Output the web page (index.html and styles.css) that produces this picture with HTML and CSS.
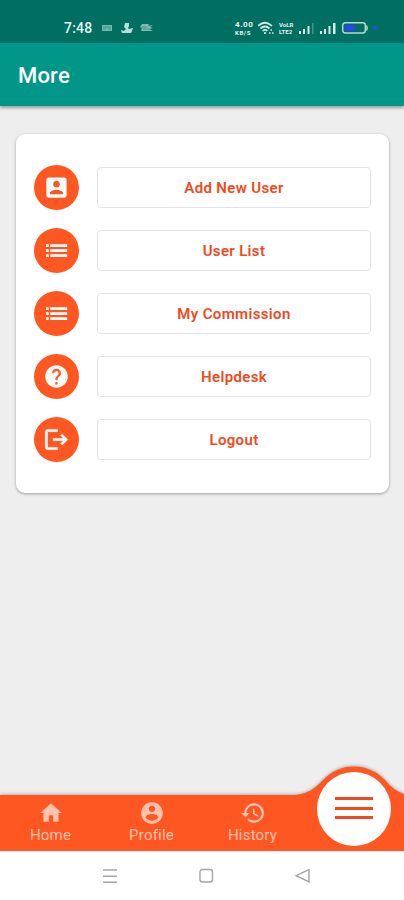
FILE: index.html
```html
<!DOCTYPE html>
<html lang="en">
<head>
<meta charset="utf-8">
<title>More</title>
<link rel="stylesheet" href="styles.css">
</head>
<body>
<div class="screen">
  <div class="status">
    <span class="clock">7:48</span>
    <svg class="notes" width="54" height="14" viewBox="0 0 54 14" fill="#b9dcd6">
      <path d="M2 4h10v6H2z" opacity=".65"/><path d="M3 6h8M3 8h3m2 0h3" stroke="#006f62" stroke-width=".5"/>
      <path d="M25 2h4v3l-1 2 1 1 4-1-1 3-1 2h-9l-1-3 3 1 2-2-2-2z"/>
      <path d="M42 3h7l-1 2 5-1-3 2 3 1-4 1 4 2H41l1-3-2-1z" opacity=".7"/><path d="M42 6h5m-4 2h6" stroke="#006f62" stroke-width=".5"/>
    </svg>
    <span class="tiny speed"><span>4.00</span><span>KB/S</span></span>
    <svg class="wifi" width="17" height="14" viewBox="0 0 17 14" fill="none" stroke="#d5ebe7" stroke-width="1.700">
      <path d="M0 5q7-6.500 14 0M2.500 7.500q4.500-4 9 0M4.800 9.900q2.300-2 4.600 0"/><path d="M7 11v2M11 12h1.500m0-3H14m0 3h1.500"/>
    </svg>
    <span class="tiny volte"><span>VoLR</span><span>LTE2</span></span>
    <svg class="signals" width="40" height="14" viewBox="0 0 40 14" fill="#d5ebe7">
      <path d="M0 10h2v3H0zM4 8h2v5H4zM8.500 5h2v8h-2z"/><path d="M13 2h1.500v11H13z" opacity=".3"/>
      <path d="M21 10h2v3h-2zM25 8h2v5h-2zM29.500 5h2v8h-2zM34 2h2.500v11H34z"/>
    </svg>
    <svg class="battery" width="36" height="12" viewBox="0 0 36 12">
      <rect x=".7" y=".7" width="22.600" height="10.300" rx="2.500" fill="none" stroke="#b4d9d2" stroke-width="1.400"/>
      <rect x="2.800" y="2.800" width="10" height="6.300" fill="#2748e2"/><path d="M24.500 3.500q1.500 2.400 0 5" fill="none" stroke="#d5ebe7" stroke-width="1.300"/>
      <path d="M33.500 3L29 6h2l2.500 3L35 6z" fill="#2356cc"/>
    </svg>
  </div>
  <header class="appbar">More</header>
  <main class="content">
    <section class="card">
      <div class="row"><span class="disc"><svg viewBox="0 0 24 24"><path d="M3 5v14c0 1.100.89 2 2 2h14c1.100 0 2-.9 2-2V5c0-1.100-.9-2-2-2H5c-1.110 0-2 .9-2 2zm12 4c0 1.660-1.340 3-3 3s-3-1.340-3-3 1.340-3 3-3 3 1.340 3 3zm-9 8c0-2 4-3.100 6-3.100s6 1.100 6 3.100v1H6v-1z"/></svg></span><a class="btn">Add New User</a></div>
      <div class="row"><span class="disc"><svg viewBox="0 0 24 24"><path d="M2.700 6.500h2.400v2.400H2.700zm0 4.400h2.400v2.400H2.700zm0 4.400h2.400v2.400H2.700zM6.500 6.500h15v2.400h-15zm0 4.400h15v2.400h-15zm0 4.400h15v2.400h-15z"/></svg></span><a class="btn">User List</a></div>
      <div class="row"><span class="disc"><svg viewBox="0 0 24 24"><path d="M2.700 6.500h2.400v2.400H2.700zm0 4.400h2.400v2.400H2.700zm0 4.400h2.400v2.400H2.700zM6.500 6.500h15v2.400h-15zm0 4.400h15v2.400h-15zm0 4.400h15v2.400h-15z"/></svg></span><a class="btn">My Commission</a></div>
      <div class="row"><span class="disc"><svg viewBox="0 0 24 24"><path d="M12 2C6.480 2 2 6.480 2 12s4.480 10 10 10 10-4.480 10-10S17.520 2 12 2zm1 17h-2v-2h2v2zm2.070-7.750l-.9.920C13.450 12.900 13 13.500 13 15h-2v-.5c0-1.100.450-2.100 1.170-2.830l1.240-1.260c.370-.360.590-.860.590-1.410 0-1.100-.9-2-2-2s-2 .9-2 2H8c0-2.210 1.790-4 4-4s4 1.790 4 4c0 .880-.360 1.680-.930 2.250z"/></svg></span><a class="btn">Helpdesk</a></div>
      <div class="row"><span class="disc"><svg viewBox="0 0 24 24"><path d="M17 7l-1.410 1.410L18.170 11H9v2h9.170l-2.580 2.580L17 17l5-5zM4 5h9V3H4c-1.100 0-2 .9-2 2v14c0 1.100.9 2 2 2h9v-2H4V5z" stroke="#fff" stroke-width=".4"/></svg></span><a class="btn">Logout</a></div>
    </section>
  </main>
  <nav class="tabs">
    <svg class="hump" width="404" height="89" viewBox="0 0 404 89"><path d="M0 33H291C309 33 316 25 323 18Q336 4.500 354 4.500T385 18Q394 29 404 32V89H0z" fill="#ff5722"/></svg>
    <a class="tab"><svg viewBox="0 0 24 24"><path d="M10 20v-6h4v6h5v-8h3L12 3 2 12h3v8z"/></svg><span>Home</span></a>
    <a class="tab"><svg viewBox="0 0 24 24"><path d="M12 2C6.480 2 2 6.480 2 12s4.480 10 10 10 10-4.480 10-10S17.520 2 12 2zm0 3c1.660 0 3 1.340 3 3s-1.340 3-3 3-3-1.340-3-3 1.340-3 3-3zm0 14.200c-2.500 0-4.710-1.280-6-3.220.030-1.990 4-3.080 6-3.080 1.990 0 5.970 1.090 6 3.080-1.290 1.940-3.500 3.220-6 3.220z"/></svg><span>Profile</span></a>
    <a class="tab"><svg viewBox="0 0 24 24"><path d="M13 3c-4.970 0-9 4.030-9 9H1l3.890 3.890.070.140L9 12H6c0-3.870 3.130-7 7-7s7 3.130 7 7-3.130 7-7 7c-1.930 0-3.680-.790-4.940-2.060l-1.420 1.420C8.270 19.990 10.510 21 13 21c4.970 0 9-4.030 9-9s-4.030-9-9-9zm-1 5v5l4.280 2.540.720-1.210-3.500-2.080V8H12z"/></svg><span>History</span></a>
    <a class="menu"><i></i><i></i><i></i></a>
  </nav>
  <div class="sysnav">
    <svg width="16" height="16" viewBox="0 0 16 16"><path d="M1 2h14M1 8.300h14M1 14.300h14"/></svg>
    <svg width="16" height="16" viewBox="0 0 16 16"><rect x="2" y="1.500" width="12.500" height="12.500" rx="2.500"/></svg>
    <svg width="16" height="16" viewBox="0 0 16 16"><path d="M15 1.500v12.500L2 7.700z"/></svg>
  </div>
</div>
</body>
</html>
```
FILE: styles.css
```css
* { box-sizing: border-box; }
body { margin: 0; font-family: Roboto, "Liberation Sans", sans-serif; }
.screen { width: 404px; height: 900px; background: #eee; display: flex; flex-direction: column; overflow: hidden; }
.status { height: 43px; background: #006f62; display: flex; align-items: center; padding: 12px 0 0 64px; color: #e3f2ef; flex: none; }
.clock { width: 35px; font-size: 14px; font-weight: 500; line-height: 14px; letter-spacing: .2px; }
.notes { margin-left: 1px; }
.tiny { display: flex; flex-direction: column; font-weight: 700; }
.speed { margin-left: 81px; width: 21px; font-size: 8px; line-height: 9px; letter-spacing: .6px; }
.speed span + span { font-size: 6px; line-height: 7px; letter-spacing: .6px; }
.wifi { margin-left: 2px; }
.volte { margin-left: 4px; width: 17px; font-size: 6px; line-height: 7px; }
.signals { margin-left: 3px; }
.battery { margin-left: 3px; }
.appbar { height: 63px; flex: none; background: #009688; color: #fff; font-size: 22px; font-weight: 500; line-height: 65px; padding-left: 18px; box-shadow: 0 2px 3px rgba(0,0,0,.35); letter-spacing: .2px; }
.content { flex: 1; padding: 28px 15px 0 16px; }
.card { height: 359px; background: #fff; border-radius: 9px; box-shadow: 0 1px 3px rgba(0,0,0,.35); padding: 31px 18px; display: flex; flex-direction: column; gap: 18px; }
.row { height: 45px; display: flex; align-items: center; gap: 18px; }
.disc { width: 45px; height: 45px; border-radius: 50%; background: #ff5722; display: grid; place-items: center; flex: none; }
.disc svg { width: 27px; height: 27px; fill: #fff; }
.btn { flex: 1; height: 41px; border: 1px solid #e4e4e4; border-radius: 4px; display: grid; place-items: center; color: #f04a1c; font-size: 15px; font-weight: 600; letter-spacing: .35px; }
.tabs { height: 56px; flex: none; position: relative; display: flex; background: #ff5722; }
.hump { position: absolute; left: 0; bottom: 0; filter: drop-shadow(0 -1px 1.5px rgba(0,0,0,.25)); }
.tab { position: relative; width: 101px; display: flex; flex-direction: column; align-items: center; padding-top: 5px; color: #ffc2ad; font-size: 15px; line-height: 17px; letter-spacing: .2px; }
.tab svg { width: 26px; height: 26px; fill: #ffc2ad; margin-bottom: 1px; }
.menu { position: absolute; left: 317px; top: -23px; width: 74px; height: 74px; border-radius: 50%; background: #fff; display: flex; flex-direction: column; align-items: center; justify-content: center; gap: 6.5px; padding-bottom: 2px; }
.menu i { width: 38px; height: 3px; background: #f04a1c; }
.sysnav { height: 49px; flex: none; background: #fff; display: flex; justify-content: center; gap: 80px; padding: 17px 0 0 8px; }
.sysnav svg { fill: none; stroke: #a5a5a5; stroke-width: 1.4; }
```
